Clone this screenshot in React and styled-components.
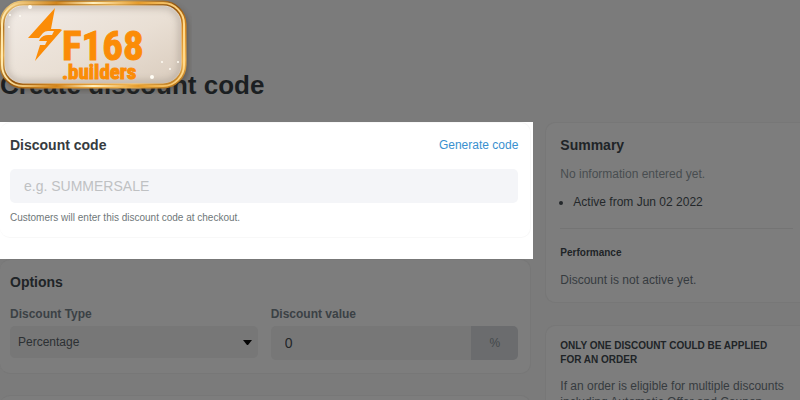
import React, { useState } from 'react';
import styled, { createGlobalStyle } from 'styled-components';

const GlobalStyle = createGlobalStyle`
  * {
    box-sizing: border-box;
  }

  body {
    margin: 0;
    background: #7b7b7b;
    color: #23272b;
    font-family: "Liberation Sans", Arial, sans-serif;
    font-size: 12px;
    line-height: 16px;
  }

  button, input, select {
    font-family: inherit;
  }
`;

const Page = styled.div`
  position: relative;
  height: 100vh;
  overflow: hidden;
`;

const Badge = styled.a`
  position: absolute;
  top: 0;
  left: 0;
  line-height: 0;
`;

const Header = styled.header`
  padding: 70px 0 22px;
`;

const Title = styled.h1`
  margin: 0;
  font-size: 26px;
  line-height: 30px;
  color: #1b1f22;
`;

const Columns = styled.main`
  display: grid;
  grid-template-columns: minmax(0, 2fr) minmax(0, 1fr);
`;

const Sidebar = styled.aside`
  display: flex;
  flex-direction: column;
  gap: 22px;
  padding-left: 12px;
`;

const Spotlight = styled.div`
  background: white;
  padding: 0 2px 21px 0;
`;

const Card = styled.section`
  padding: 13px 12px 12px 10px;
  border: 1px solid ${({ $lit }) => ($lit ? '#f8f8f8' : '#777777')};
  border-left: 0;
  border-radius: 10px;
  background: ${({ $lit }) => ($lit ? 'white' : '#7d7d7d')};
`;

const DimCard = styled(Card)`
  margin: 0 2px 21px 0;
  padding-bottom: 13px;
`;

const SideCard = styled(Card)`
  padding: 13px ${({ $inset }) => ($inset ? '14px' : '7px')} 14px 14px;
  border-left: 1px solid #777777;
  border-right: 0;
  border-radius: 10px 0 0 10px;
`;

const CardHeader = styled.div`
  display: flex;
  align-items: center;
  justify-content: space-between;
  margin-bottom: ${({ $tight }) => ($tight ? '12px' : '15px')};
`;

const Heading = styled.h2`
  margin: 0;
  font-size: 14px;
  font-weight: bold;
  line-height: 18px;
  color: ${({ $lit }) => ($lit ? '#363b40' : '#202427')};
`;

const LinkButton = styled.button`
  padding: 0;
  border: 0;
  background: none;
  font-size: 12px;
  line-height: 16px;
  color: #3990cf;
  cursor: pointer;
`;

const CodeInput = styled.input`
  display: block;
  width: 100%;
  height: 34px;
  padding: 0 14px;
  border: 0;
  border-radius: 5px;
  background: #f4f5f8;
  font-size: 14px;
  color: #363b40;

  &::placeholder {
    color: #bfc1c3;
  }
`;

const Help = styled.p`
  margin: 8px 0 0;
  font-size: 10px;
  line-height: 14px;
  color: #6f7779;
`;

const Fields = styled.div`
  display: grid;
  grid-template-columns: repeat(2, minmax(0, 1fr));
  gap: 13px;
`;

const Label = styled.label`
  display: block;
  margin-bottom: 4px;
  font-weight: bold;
  line-height: 16px;
  color: #3b4145;
`;

const SelectWrap = styled.div`
  position: relative;

  svg {
    position: absolute;
    top: 14px;
    right: 6px;
    pointer-events: none;
  }
`;

const Select = styled.select`
  display: block;
  width: 100%;
  height: 32px;
  padding: 0 8px;
  border: 0;
  border-radius: 5px;
  appearance: none;
  background: #777777;
  font-size: 12px;
  color: #2c3033;
`;

const InputGroup = styled.div`
  display: flex;
  height: 34px;
  border-radius: 5px;
  overflow: hidden;
`;

const ValueInput = styled.input`
  flex: 1;
  min-width: 0;
  padding: 0 14px;
  border: 0;
  background: #777777;
  font-size: 14px;
  color: #232629;
`;

const Suffix = styled.span`
  display: flex;
  align-items: center;
  justify-content: center;
  width: 47px;
  background: #6b6c6e;
  color: #43484b;
`;

const Text = styled.p`
  margin: 0;
  line-height: 16px;
  color: ${({ $muted }) => ($muted ? '#484d50' : '#363b3f')};
`;

const List = styled.ul`
  margin: 12px 0 18px;
  padding-left: 13px;
  color: #24282b;
`;

const Divider = styled.hr`
  margin: 0;
  border: 0;
  border-top: 1px solid #747474;
`;

const SubHeading = styled.h3`
  margin: 17px 0 12px;
  font-size: 10px;
  line-height: 14px;
  color: #202427;
`;

const Notice = styled.h3`
  margin: 0 0 11px;
  font-size: 10px;
  line-height: 14px;
  color: #202427;
  text-transform: uppercase;
`;

const sparkles = [
  [10, 15, 1], [20, 16, 1], [30, 7, 2], [9, 27, 1],
  [162, 62, 1], [178, 62, 1], [170, 69, 1], [152, 77, 2],
];

const Logo = () => (
  <svg width="192" height="94" viewBox="0 0 192 94" aria-hidden="true">
    <defs>
      <linearGradient id="gold" x1="0" y1="0" x2="1" y2="1">
        <stop offset="0" stopColor="#f9d98d" />
        <stop offset="0.15" stopColor="#b5761f" />
        <stop offset="0.32" stopColor="#e0a94d" />
        <stop offset="0.5" stopColor="#8f520d" />
        <stop offset="0.65" stopColor="#d88a22" />
        <stop offset="0.85" stopColor="#f0b350" />
        <stop offset="1" stopColor="#a9670f" />
      </linearGradient>
      <linearGradient id="shine" x1="0" y1="0" x2="1" y2="0">
        <stop offset="0" stopColor="#ffe9ad" />
        <stop offset="0.3" stopColor="#d1841c" />
        <stop offset="0.5" stopColor="#fff0c0" />
        <stop offset="0.75" stopColor="#e59b2b" />
        <stop offset="1" stopColor="#ffd98a" />
      </linearGradient>
      <linearGradient id="plate" x1="0" y1="0" x2="1" y2="1">
        <stop offset="0" stopColor="#f2ece7" />
        <stop offset="0.55" stopColor="#e9dfd4" />
        <stop offset="1" stopColor="#d8cabb" />
      </linearGradient>
      <filter id="soft" x="-20%" y="-20%" width="140%" height="140%">
        <feGaussianBlur stdDeviation="3" />
      </filter>
      <clipPath id="inner">
        <rect x="5" y="6" width="176" height="77" rx="18" />
      </clipPath>
    </defs>
    <rect x="2" y="5" width="186" height="85" rx="22" fill="#3c3226" opacity="0.45" filter="url(#soft)" />
    <rect x="2" y="3" width="182" height="83" rx="21" fill="url(#plate)" />
    <g clipPath="url(#inner)">
      <rect x="5" y="6" width="176" height="77" rx="18" fill="none" stroke="#a0968c" strokeWidth="6" opacity="0.5" filter="url(#soft)" />
    </g>
    <rect x="2" y="3" width="182" height="83" rx="21" fill="none" stroke="url(#gold)" strokeWidth="5" />
    <rect x="2" y="3" width="182" height="83" rx="21" fill="none" stroke="url(#shine)" strokeWidth="2" />
    <path d="M55 8 28 38H39L43 33Q45 31 48 31H54L52 35H48Q43 35 40 39L39 41H47L45 45H40L35 61 62 30 60 29H51Z" fill="#fb8c07" />
    {sparkles.map(([x, y, r]) => (
      <circle key={`${x}-${y}`} cx={x} cy={y} r={r} fill="#fffdf5" />
    ))}
    <g
      fill="#fb8c07"
      stroke="#fb8c07"
      fontFamily="'Roboto Condensed', Roboto, 'Liberation Sans', sans-serif"
      fontWeight="bold"
    >
      <text x="62" y="60" fontSize="41" strokeWidth="1">F168</text>
      <text x="62" y="79" fontSize="21" strokeWidth="1">.builders</text>
    </g>
  </svg>
);

const App = () => {
  const [code, setCode] = useState('');
  const [value, setValue] = useState('0');

  return (
    <Page>
      <GlobalStyle />
      <Header>
        <Title>Create discount code</Title>
      </Header>
      <Columns>
        <div>
          <Spotlight>
            <Card $lit>
              <CardHeader>
                <Heading as="label" htmlFor="code" $lit>Discount code</Heading>
                <LinkButton type="button">Generate code</LinkButton>
              </CardHeader>
              <CodeInput
                id="code"
                placeholder="e.g. SUMMERSALE"
                value={code}
                onChange={(event) => setCode(event.target.value)}
              />
              <Help>Customers will enter this discount code at checkout.</Help>
            </Card>
          </Spotlight>
          <DimCard>
            <CardHeader>
              <Heading>Options</Heading>
            </CardHeader>
            <Fields>
              <div>
                <Label htmlFor="type">Discount Type</Label>
                <SelectWrap>
                  <Select id="type">
                    <option>Percentage</option>
                  </Select>
                  <svg width="9" height="5" viewBox="0 0 9 5" aria-hidden="true">
                    <path d="M0 0H9L5 5H4Z" fill="#050505" />
                  </svg>
                </SelectWrap>
              </div>
              <div>
                <Label htmlFor="value">Discount value</Label>
                <InputGroup>
                  <ValueInput
                    id="value"
                    value={value}
                    onChange={(event) => setValue(event.target.value)}
                  />
                  <Suffix>%</Suffix>
                </InputGroup>
              </div>
            </Fields>
          </DimCard>
          <DimCard />
        </div>
        <Sidebar>
          <SideCard>
            <CardHeader $tight>
              <Heading>Summary</Heading>
            </CardHeader>
            <Text $muted>No information entered yet.</Text>
            <List>
              <li>Active from Jun 02 2022</li>
            </List>
            <Divider />
            <SubHeading>Performance</SubHeading>
            <Text>Discount is not active yet.</Text>
          </SideCard>
          <SideCard $inset>
            <Notice>Only one discount could be applied for an order</Notice>
            <Text>If an order is eligible for multiple discounts including Automatic Offer and Coupon</Text>
          </SideCard>
        </Sidebar>
      </Columns>
      <Badge href="#" aria-label="F168.builders">
        <Logo />
      </Badge>
    </Page>
  );
};

export default App;
